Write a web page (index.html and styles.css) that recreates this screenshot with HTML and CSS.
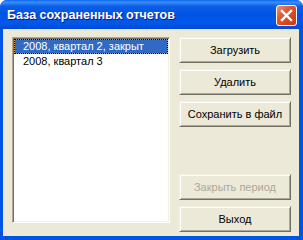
FILE: index.html
```html
<!DOCTYPE html>
<html lang="ru">
<head>
  <meta charset="UTF-8">
  <title>База сохраненных отчетов</title>
  <link rel="stylesheet" href="styles.css">
</head>
<body>

  <div class="okno">
    <div class="zagolovok">
      <span class="nazvanie">База сохраненных отчетов</span>
      <button class="zakryt" aria-label="Закрыть">
        <svg width="13" height="13" viewBox="0 0 13 13">
          <path d="M2 2 L11 11 M11 2 L2 11" stroke="#fff" stroke-width="2.4" stroke-linecap="square"/>
        </svg>
      </button>
    </div>

    <div class="soderzhimoe">
      <ul class="spisok">
        <li class="vybran">2008, квартал 2, закрыт</li>
        <li>2008, квартал 3</li>
      </ul>

      <div class="knopki">
        <button class="knopka">Загрузить</button>
        <button class="knopka">Удалить</button>
        <button class="knopka">Сохранить в файл</button>
        <div class="probel"></div>
        <button class="knopka" disabled>Закрыть период</button>
        <button class="knopka">Выход</button>
      </div>
    </div>
  </div>

</body>
</html>
```

FILE: styles.css
```css
body {
  margin: 0;
  background-color: #fff;
  font-family: 'Liberation Sans', Arial, sans-serif;
  font-size: 11px;
}

.okno {
  width: 303px;
  height: 240px;
  box-sizing: border-box;
  display: flex;
  flex-direction: column;
  background-color: #0054e3;
  border-radius: 7px 7px 0 0;
  overflow: hidden;
}

.zagolovok {
  height: 29px;
  flex: none;
  display: flex;
  align-items: center;
  padding: 0 6px 0 7px;
  background: linear-gradient(to bottom, #0a6af2 0%, #3d8cf7 8%, #0a5ee8 22%, #0054e3 50%, #0058ea 80%, #0049d4 100%);
}

.nazvanie {
  flex: 1;
  color: #fff;
  font-weight: bold;
  font-size: 12.5px;
  text-shadow: 1px 1px #0a1e8c;
  margin-top: 1px;
}

.zakryt {
  width: 21px;
  height: 21px;
  padding: 0;
  margin-top: 2px;
  display: flex;
  align-items: center;
  justify-content: center;
  border: 1px solid #fff;
  border-radius: 3px;
  background: linear-gradient(135deg, #f0907a 0%, #e35a36 35%, #d9431c 70%, #c93a17 100%);
}

.soderzhimoe {
  flex: 1;
  display: flex;
  align-items: flex-start;
  gap: 9px;
  margin: 0 4px 4px 3px;
  padding: 8px 8px 4px 9px;
  background-color: #ece9d8;
}

.spisok {
  width: 158px;
  height: 186px;
  margin: 0;
  padding: 1px;
  list-style: none;
  box-sizing: border-box;
  background-color: #fff;
  border: 1px solid;
  border-color: #aca899 #fff #fff #aca899;
  box-shadow: inset 1px 1px #716f64, inset -1px -1px #f1efe2;
}

.spisok li {
  height: 13px;
  line-height: 13px;
  padding: 0 2px 0 8px;
  color: #000;
  border: 1px solid transparent;
  white-space: nowrap;
}

.spisok li.vybran {
  color: #fff;
  border: 1px dotted #000;
  background: linear-gradient(#316ac5, #316ac5) padding-box, linear-gradient(#ce9539, #ce9539) border-box;
}

.knopki {
  width: 112px;
  align-self: stretch;
  display: flex;
  flex-direction: column;
  gap: 6px;
}

.probel {
  flex: 1;
}

.knopka {
  height: 26px;
  flex: none;
  padding: 0;
  font-family: inherit;
  font-size: 11px;
  color: #000;
  background-color: #ece9d8;
  border: 1px solid;
  border-color: #f1efe2 #716f64 #716f64 #f1efe2;
  box-shadow: inset 1px 1px #fff, inset -1px -1px #aca899;
}

.knopka:disabled {
  color: #aca899;
}
```
